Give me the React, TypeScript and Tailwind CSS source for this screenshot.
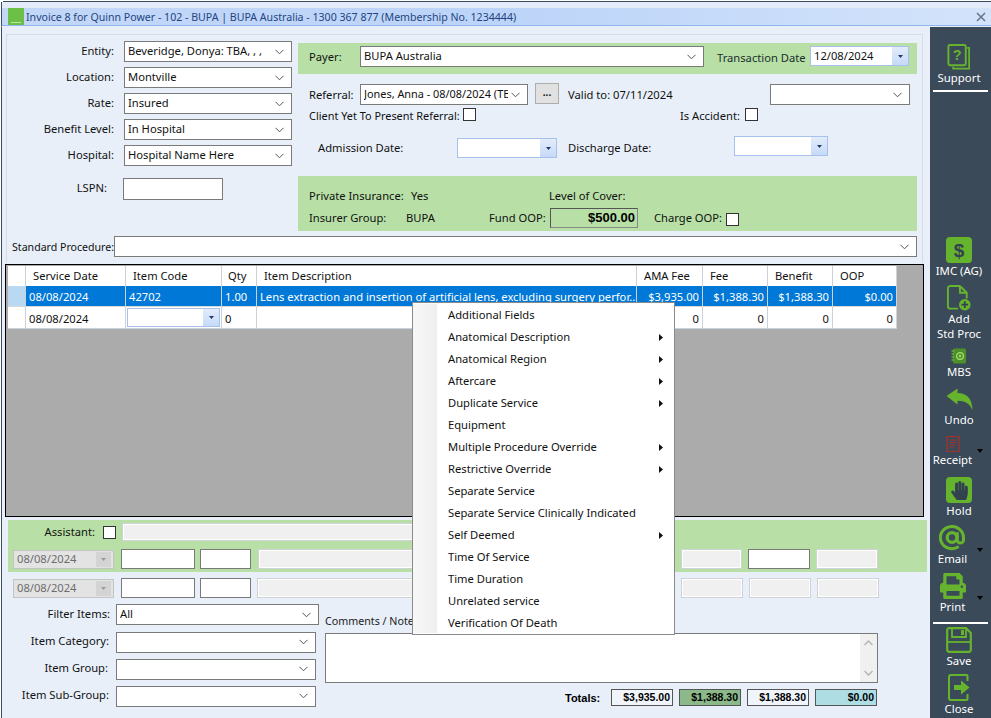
import React from "react";
import { FaHandPaper, FaPrint } from "react-icons/fa";

const Chevron = () => (
  <svg width="9" height="6" viewBox="0 0 9 6" className="shrink-0">
    <path d="M0.5 0.8 L4.5 4.8 L8.5 0.8" fill="none" stroke="#555" strokeWidth="1" />
  </svg>
);

function Select({ text, className = "", textClass = "" }: { text?: string; className?: string; textClass?: string }) {
  return (
    <div className={`flex items-center justify-between bg-white border border-[#7a7a7a] pl-[3px] pr-[3px] h-[21px] shrink-0 ${className}`}>
      <span className={`min-w-0 mb-[2px] overflow-hidden whitespace-nowrap leading-[16px] ${textClass}`}>{text}</span>
      <span className="ml-[3px] mr-[4px] flex shrink-0"><Chevron /></span>
    </div>
  );
}

function DateBox({ text, className = "" }: { text?: string; className?: string }) {
  return (
    <div className={`flex items-center justify-between bg-white border border-[#a6c2ec] pl-[3px] h-[20px] shrink-0 ${className}`}>
      <span className="leading-[14px]">{text}</span>
      <span className="flex items-center justify-center h-full w-[16px] bg-gradient-to-b from-[#e2ecfb] to-[#c6daf7]">
        <svg width="5" height="3" viewBox="0 0 5 3"><path d="M0 0 H5 L2.5 3 Z" fill="#1f3a6e" /></svg>
      </span>
    </div>
  );
}

const Check = ({ className = "" }: { className?: string }) => (
  <div className={`w-[13px] h-[13px] bg-white border border-[#333] shrink-0 ${className}`} />
);

const Input = ({ className = "" }: { className?: string }) => (
  <div className={`bg-white border border-[#7a7a7a] shrink-0 ${className}`} />
);

const Disabled = ({ className = "" }: { className?: string }) => (
  <div className={`bg-[#f0f0f0] border-2 border-white outline outline-1 outline-[#cfd3d8] -outline-offset-1 shrink-0 ${className}`} />
);

const DisabledDate = () => (
  <div className="flex items-center justify-between w-[101px] h-[19px] bg-[#e3e3e3] border border-[#c4c4c4] pl-[3px] pr-[2px] text-[#6d6d6d] shrink-0">
    <span className="leading-[14px]">08/08/2024</span>
    <span className="flex items-center justify-center w-[15px] h-[15px] bg-[#d4d4d4]">
      <svg width="5" height="3" viewBox="0 0 5 3"><path d="M0 0 H5 L2.5 3 Z" fill="#9a9a9a" /></svg>
    </span>
  </div>
);

const Total = ({ children, className = "" }: { children: React.ReactNode; className?: string }) => (
  <div className={`w-[62px] h-[17px] border border-[#555] flex items-center justify-end pr-[2px] font-['Liberation_Sans',sans-serif] font-bold text-[10.5px] text-black shrink-0 ${className}`}>
    {children}
  </div>
);

const Caret = () => (
  <svg width="6" height="4" viewBox="0 0 6 4" className="absolute right-[5px] bottom-[15px]"><path d="M0 0 H6 L3 4 Z" fill="#000" /></svg>
);

const SideLabel = ({ children }: { children: React.ReactNode }) => (
  <div className="h-[16px] leading-[16px] text-white text-center whitespace-nowrap">{children}</div>
);

const Cell = ({ children, className = "" }: { children?: React.ReactNode; className?: string }) => (
  <div className={`flex items-center shrink-0 whitespace-nowrap overflow-hidden border-r border-[#c9d3de] ${className}`}>{children}</div>
);

const cols = ["w-[18px]", "w-[100px]", "w-[96px]", "w-[35px]", "w-[380px]", "w-[66px]", "w-[65px]", "w-[65px]", "w-[64px]"];

const menu: [string, boolean][] = [
  ["Additional Fields", false],
  ["Anatomical Description", true],
  ["Anatomical Region", true],
  ["Aftercare", true],
  ["Duplicate Service", true],
  ["Equipment", false],
  ["Multiple Procedure Override", true],
  ["Restrictive Override", true],
  ["Separate Service", false],
  ["Separate Service Clinically Indicated", false],
  ["Self Deemed", true],
  ["Time Of Service", false],
  ["Time Duration", false],
  ["Unrelated service", false],
  ["Verification Of Death", false],
];

const G = "#66b32e";

export default function App() {
  return (
    <div className="relative w-[991px] h-[718px] overflow-hidden bg-white text-[11.2px] text-[#111] font-['Noto_Sans',sans-serif]">
      <div className="h-px bg-white" />
      <div className="h-[1px] ml-[3px] bg-[#3c4a62]" />
      <div className="h-[6px] ml-[1px] border-l border-[#3c4a62] bg-[#e3ebf8]" />
      <div className="ml-[1px] border-l border-[#3c4a62] h-[17px] flex items-center bg-gradient-to-r from-[#c3d7f8] via-[#bcd4f9] to-[#d3e3fa] pl-[6px] pr-[5px]">
        <div className="w-[16px] h-[17px] -mt-[1px] bg-[#6cbf47] shrink-0 flex items-end justify-center">
          <div className="w-[10px] h-px mb-[2px] bg-[#b8e6a0]" />
        </div>
        <span className="ml-[2px] text-[#23457f] text-[10.6px] leading-[14px] whitespace-nowrap">Invoice 8 for Quinn Power - 102 - BUPA | BUPA Australia - 1300 367 877 (Membership No. 1234444)</span>
        <svg width="10" height="10" viewBox="0 0 10 10" className="ml-auto mr-0">
          <path d="M1 1 L9 9 M9 1 L1 9" stroke="#6c7686" strokeWidth="1.6" />
        </svg>
      </div>
      <div className="ml-[1px] border-l border-[#3c4a62] h-[2px] bg-[#8fb6ee] border-b border-b-[#e8eff9]" />

      <div className="ml-[1px] border-l border-[#3c4a62] flex h-[691px] bg-[#e8eff9]">
        {/* main */}
        <div className="w-[928px] pl-[3px] pt-[7px] shrink-0">
          <div className="ml-px w-[917px] h-[229px] border-t border-r border-l border-[#d8dbdf]">
            <div className="flex h-[197px]">
              {/* left col */}
              <div className="w-[291px] shrink-0 pt-[6px] flex flex-col gap-[5px]">
                {[
                  ["Entity:", "Beveridge, Donya: TBA, , ,"],
                  ["Location:", "Montville"],
                  ["Rate:", "Insured"],
                  ["Benefit Level:", "In Hospital"],
                  ["Hospital:", "Hospital Name Here"],
                ].map(([l, v]) => (
                  <div key={l} className="flex items-center h-[21px]">
                    <span className="w-[107px] mb-[2px] text-right leading-[14px]">{l}</span>
                    <Select text={v} className="ml-[10px] w-[168px]" />
                  </div>
                ))}
                <div className="flex items-center h-[22px] mt-[7px]">
                  <span className="w-[100px] mb-[2px] text-right leading-[14px]">LSPN:</span>
                  <Input className="ml-[16px] w-[100px] h-[22px]" />
                </div>
              </div>
              {/* right col */}
              <div className="w-[619px] shrink-0 pt-[8px]">
                <div className="h-[31px] bg-[#b8e0a6] flex items-start pt-[3px] pl-[11px]">
                  <span className="w-[51px] mt-[4px] leading-[14px]">Payer:</span>
                  <Select text="BUPA Australia" className="w-[344px]" />
                  <span className="ml-[13px] w-[93px] mt-[5px] leading-[14px] whitespace-nowrap text-[#1b2e2e]">Transaction Date</span>
                  <DateBox text="12/08/2024" className="w-[99px]" />
                </div>
                <div className="flex items-center h-[23px] mt-[9px] pl-[11px]">
                  <span className="w-[51px] leading-[14px]">Referral:</span>
                  <Select text="Jones, Anna - 08/08/2024 (TBA)" textClass="text-[10.9px]" className="w-[168px]" />
                  <div className="ml-[7px] w-[24px] h-[21px] bg-[#e1e1e1] border border-[#adadad] flex items-center justify-center leading-none text-[10px] font-bold pb-[3px] -mt-[2px]">...</div>
                  <span className="ml-[9px] w-[202px] leading-[14px]">Valid to: 07/11/2024</span>
                  <Select className="w-[140px]" />
                </div>
                <div className="flex items-center h-[20px] pl-[11px]">
                  <span className="w-[154px] text-[10.9px] leading-[14px] whitespace-nowrap">Client Yet To Present Referral:</span>
                  <Check className="-mt-[4px]" />
                  <span className="ml-[204px] w-[65px] leading-[14px] whitespace-nowrap">Is Accident:</span>
                  <Check className="-mt-[3px]" />
                </div>
                <div className="flex items-start h-[22px] mt-[10px] pl-[20px]">
                  <span className="w-[139px] mt-[5px] leading-[14px]">Admission Date:</span>
                  <DateBox className="w-[100px] mt-[2px]" />
                  <span className="ml-[11px] w-[166px] mt-[5px] leading-[14px]">Discharge Date:</span>
                  <DateBox className="w-[94px]" />
                </div>
                <div className="h-[55px] mt-[18px] bg-[#b8e0a6] pt-[12px] pl-[11px]">
                  <div className="flex items-center h-[16px]">
                    <span className="w-[102px] leading-[14px] whitespace-nowrap">Private Insurance:</span>
                    <span className="w-[138px] leading-[14px]">Yes</span>
                    <span className="leading-[14px]">Level of Cover:</span>
                  </div>
                  <div className="flex items-center h-[22px] mt-[3px]">
                    <span className="w-[97px] leading-[14px]">Insurer Group:</span>
                    <span className="w-[83px] leading-[14px]">BUPA</span>
                    <span className="w-[61px] leading-[14px] whitespace-nowrap">Fund OOP:</span>
                    <div className="w-[88px] h-[20px] border-l border-t border-[#555] border-r border-b border-r-[#888] border-b-[#888] flex items-center justify-end pr-[2px] font-['Liberation_Sans',sans-serif] font-bold text-[13px] text-black">$500.00</div>
                    <span className="ml-[16px] w-[72px] leading-[14px] whitespace-nowrap">Charge OOP:</span>
                    <Check className="mt-[3px]" />
                  </div>
                </div>
              </div>
            </div>
            <div className="flex items-center h-[21px] mt-[4px]">
              <span className="ml-[5px] w-[102px] text-[10.6px] leading-[14px] whitespace-nowrap">Standard Procedure:</span>
              <Select className="w-[803px]" />
            </div>
          </div>

          {/* grid */}
          <div className="w-[919px] h-[253px] mt-px border border-black bg-[#ababab] pl-[2px] pt-px">
            <div className="flex h-[20px] bg-white w-[889px]">
              <Cell className={cols[0]} />
              <Cell className={`${cols[1]} pl-[7px]`}>Service Date</Cell>
              <Cell className={`${cols[2]} pl-[7px]`}>Item Code</Cell>
              <Cell className={`${cols[3]} pl-[6px]`}>Qty</Cell>
              <Cell className={`${cols[4]} pl-[7px]`}>Item Description</Cell>
              <Cell className={`${cols[5]} pl-[7px]`}>AMA Fee</Cell>
              <Cell className={`${cols[6]} pl-[7px]`}>Fee</Cell>
              <Cell className={`${cols[7]} pl-[7px]`}>Benefit</Cell>
              <Cell className={`${cols[8]} pl-[7px]`}>OOP</Cell>
            </div>
            <div className="flex h-[21px] w-[889px] text-white border-b border-[#d8d8d8] bg-[#0078d7]">
              <Cell className={`${cols[0]} bg-[#b9d9f2]`} />
              <Cell className={`${cols[1]} pl-[3px] pt-[2px]`}>08/08/2024</Cell>
              <Cell className={`${cols[2]} pl-[3px] pt-[2px]`}>42702</Cell>
              <Cell className={`${cols[3]} pl-[3px] pt-[2px]`}>1.00</Cell>
              <Cell className={`${cols[4]} pl-[3px] pt-[2px]`}>Lens extraction and insertion of artificial lens, excluding surgery perfor...</Cell>
              <Cell className={`${cols[5]} justify-end pr-[3px] pt-[2px]`}>$3,935.00</Cell>
              <Cell className={`${cols[6]} justify-end pr-[3px] pt-[2px]`}>$1,388.30</Cell>
              <Cell className={`${cols[7]} justify-end pr-[3px] pt-[2px]`}>$1,388.30</Cell>
              <Cell className={`${cols[8]} justify-end pr-[3px] pt-[2px]`}>$0.00</Cell>
            </div>
            <div className="flex h-[22px] w-[889px] bg-white border-b border-[#c9d3de]">
              <Cell className={cols[0]} />
              <Cell className={`${cols[1]} pl-[3px] pt-[4px]`}>08/08/2024</Cell>
              <Cell className={`${cols[2]} p-px`}><DateBox className="w-full h-full" /></Cell>
              <Cell className={`${cols[3]} pl-[3px] pt-[4px]`}>0</Cell>
              <Cell className={cols[4]} />
              <Cell className={`${cols[5]} justify-end pr-[3px] pt-[4px]`}>0</Cell>
              <Cell className={`${cols[6]} justify-end pr-[3px] pt-[4px]`}>0</Cell>
              <Cell className={`${cols[7]} justify-end pr-[3px] pt-[4px]`}>0</Cell>
              <Cell className={`${cols[8]} justify-end pr-[3px] pt-[4px]`}>0</Cell>
            </div>
          </div>

          {/* assistant */}
          <div className="ml-[3px] mt-[3px] w-[919px] h-[52px] bg-[#b8e0a6] pl-[5px] pt-[3px]">
            <div className="flex items-center h-[18px]">
              <span className="w-[82px] text-right leading-[14px]">Assistant:</span>
              <Check className="ml-[8px]" />
              <Disabled className="ml-[6px] w-[320px] h-[18px]" />
            </div>
            <div className="flex items-center h-[20px] mt-[8px]">
              <DisabledDate />
              <Input className="ml-[7px] w-[74px] h-[20px]" />
              <Input className="ml-[5px] w-[51px] h-[20px]" />
              <Disabled className="ml-[7px] w-[300px] h-[20px]" />
              <Disabled className="ml-[123px] w-[61px] h-[20px]" />
              <Input className="ml-[6px] w-[62px] h-[20px]" />
              <Disabled className="ml-[6px] w-[62px] h-[20px]" />
            </div>
          </div>
          <div className="ml-[8px] flex items-center h-[20px] mt-[6px]">
            <DisabledDate />
            <Input className="ml-[7px] w-[74px] h-[20px]" />
            <Input className="ml-[5px] w-[51px] h-[20px]" />
            <Disabled className="ml-[6px] w-[300px] h-[20px]" />
            <Disabled className="ml-[124px] w-[62px] h-[20px]" />
            <Disabled className="ml-[6px] w-[62px] h-[20px]" />
            <Disabled className="ml-[6px] w-[62px] h-[20px]" />
          </div>

          {/* bottom */}
          <div className="flex mt-[6px]">
            <div className="w-[320px] shrink-0">
              <div className="flex items-center h-[21px]">
                <span className="w-[105px] mb-[2px] text-right leading-[14px]">Filter Items:</span>
                <Select text="All" className="ml-[6px] w-[203px]" />
              </div>
              <div className="flex items-center h-[20px] mt-[7px]">
                <span className="w-[104px] mb-[2px] text-right leading-[14px]">Item Category:</span>
                <Select text="" className="ml-[7px] w-[200px] h-[20px]" />
              </div>
              <div className="flex items-center h-[20px] mt-[7px]">
                <span className="w-[103px] mb-[2px] text-right leading-[14px]">Item Group:</span>
                <Select text="" className="ml-[8px] w-[200px] h-[20px]" />
              </div>
              <div className="flex items-center h-[20px] mt-[7px]">
                <span className="w-[104px] mb-[2px] text-right leading-[14px] whitespace-nowrap">Item Sub-Group:</span>
                <Select text="" className="ml-[7px] w-[200px] h-[20px]" />
              </div>
            </div>
            <div className="w-[553px] shrink-0">
              <div className="h-[14px] mt-[10px] text-[10.7px] leading-[14px] text-[#222]">Comments / Notes:</div>
              <div className="h-[50px] mt-[5px] bg-white border border-[#7a7a7a] flex justify-end">
                <div className="w-[17px] h-full bg-[#f0f0f0] flex flex-col items-center justify-between py-[6px]">
                  <svg width="9" height="6" viewBox="0 0 9 6"><path d="M0.5 5 L4.5 1 L8.5 5" fill="none" stroke="#b5b5b5" strokeWidth="1.5" /></svg>
                  <svg width="9" height="6" viewBox="0 0 9 6"><path d="M0.5 1 L4.5 5 L8.5 1" fill="none" stroke="#b5b5b5" strokeWidth="1.5" /></svg>
                </div>
              </div>
              <div className="flex items-center h-[17px] mt-[6px] pl-[240px]">
                <span className="w-[46px] font-['Liberation_Sans',sans-serif] font-bold text-[11px] leading-[14px] text-black">Totals:</span>
                <Total className="bg-[#f0f4fb]">$3,935.00</Total>
                <Total className="ml-[6px] bg-[#8cb98a]">$1,388.30</Total>
                <Total className="ml-[6px] bg-[#f0f4fb]">$1,388.30</Total>
                <Total className="ml-[6px] bg-[#aedde4]">$0.00</Total>
              </div>
            </div>
          </div>
        </div>

        {/* sidebar */}
        <div className="w-[61px] shrink-0 h-full bg-[#3a4a59] flex flex-col pr-[3px] items-center text-[11.4px]">
          <div className="h-[17px]" />
          <svg width="24" height="26" viewBox="0 0 24 27" fill="none">
            <rect x="1" y="1" width="18" height="21" rx="1.5" stroke={G} strokeWidth="2" />
            <path d="M20.5 4 H22.5 V25.5 H6 V23.5" stroke={G} strokeWidth="1.8" />
            <text x="10" y="17" textAnchor="middle" fontSize="15" fontWeight="700" fill={G} fontFamily="Liberation Sans, sans-serif">?</text>
          </svg>
          <SideLabel>Support</SideLabel>
          <div className="w-[55px] h-[2px] mt-[4px] bg-white ml-[3px]" />

          <div className="mt-[145px] w-[26px] h-[26px] rounded-[4px] bg-[#66b32e] flex items-center justify-center text-[#33424f] font-['Liberation_Sans',sans-serif] font-bold text-[19px] leading-none">$</div>
          <SideLabel>IMC (AG)</SideLabel>

          <svg className="mt-[6px]" width="26" height="26" viewBox="0 0 26 27" fill="none">
            <path d="M14 1 H4 a2.5 2.5 0 0 0 -2.5 2.5 V22 a2.5 2.5 0 0 0 2.5 2.5 H12 M14 1 L21 8 V14 M14 1 V8 H21" stroke={G} strokeWidth="2" />
            <circle cx="19" cy="20.5" r="6" fill={G} />
            <path d="M19 17 V24 M15.5 20.5 H22.5" stroke="#33424f" strokeWidth="1.8" />
          </svg>
          <div className="h-[15px] leading-[15px] text-white text-center whitespace-nowrap">Add</div>
          <div className="h-[15px] leading-[15px] text-white text-center whitespace-nowrap">Std Proc</div>

          <svg className="mt-[7px]" width="16" height="16" viewBox="0 0 16 16">
            <rect x="2" y="0.5" width="13" height="15" rx="1.5" fill="#4d8f2a" />
            <path d="M0.5 3 H3 M0.5 6 H3 M0.5 9 H3 M0.5 12 H3" stroke="#7fce45" strokeWidth="1" />
            <circle cx="9" cy="8" r="3.4" fill="none" stroke="#a4e06c" strokeWidth="1.2" />
            <circle cx="9" cy="8" r="1.2" fill="#a4e06c" />
          </svg>
          <SideLabel>MBS</SideLabel>

          <svg className="mt-[8px]" width="27" height="24" viewBox="0 0 27 24">
            <path d="M0.5 8 L11.5 0.5 V5 C20 5 26.5 10 26.5 22.5 C24 15.5 19 12.8 11.5 12.8 V16.5 Z" fill={G} />
          </svg>
          <SideLabel>Undo</SideLabel>

          <div className="relative w-full flex flex-col items-center pr-[13px] mt-[8px]">
            <svg width="14" height="16" viewBox="0 0 14 16" fill="none">
              <rect x="1" y="0.5" width="12" height="15" stroke="#a7322c" strokeWidth="1.2" />
              <path d="M3.5 4 H10.5 M3.5 6.5 H10.5 M3.5 9 H10.5 M3.5 11.5 H7" stroke="#a7322c" strokeWidth="1" />
            </svg>
            <SideLabel>Receipt</SideLabel>
            <Caret />
          </div>

          <div className="mt-[9px] w-[26px] h-[26px] rounded-[4px] bg-[#66b32e] flex items-center justify-center text-[#33424f]">
            <FaHandPaper size={19} />
          </div>
          <SideLabel>Hold</SideLabel>

          <div className="relative w-full flex flex-col items-center pr-[13px] mt-[6px]">
            <svg width="27" height="26" viewBox="0 0 28 27" fill="none">
              <circle cx="13.5" cy="13" r="5" stroke={G} strokeWidth="3.4" />
              <path d="M19 7.5 V15.5 a3.2 3.2 0 0 0 6.4 0 V13 a12 11.5 0 1 0 -5 9.4" stroke={G} strokeWidth="3.2" />
            </svg>
            <SideLabel>Email</SideLabel>
            <Caret />
          </div>

          <div className="relative w-full flex flex-col items-center pr-[13px] mt-[6px]">
            <div className="h-[26px] flex items-center text-[#66b32e]"><FaPrint size={26} /></div>
            <SideLabel>Print</SideLabel>
            <Caret />
          </div>

          <div className="w-[55px] h-[2px] mt-[7px] bg-white ml-[3px]" />

          <svg className="mt-[3px]" width="26" height="26" viewBox="0 0 26 26" fill="none">
            <path d="M2.5 1.2 H20 L24.8 6 V23 a1.8 1.8 0 0 1 -1.8 1.8 H3 a1.8 1.8 0 0 1 -1.8 -1.8 V3 a1.8 1.8 0 0 1 1.3 -1.8 Z" stroke={G} strokeWidth="2.2" />
            <path d="M6 1.5 V10 H20 V1.5" stroke={G} strokeWidth="1.8" />
            <rect x="15" y="3" width="3" height="5" fill={G} />
            <path d="M1.5 15 H24.5" stroke={G} strokeWidth="1.8" />
          </svg>
          <SideLabel>Save</SideLabel>

          <svg className="mt-[5px]" width="22" height="27" viewBox="0 0 22 27" fill="none">
            <path d="M19.5 7 V2 a1 1 0 0 0 -1 -1 H3 a2 2 0 0 0 -2 2 V24 a2 2 0 0 0 2 2 H18.5 a1 1 0 0 0 1 -1 V20" stroke={G} strokeWidth="2" />
            <path d="M6 11 H13 V6.5 L21.5 13.5 L13 20.5 V16 H6 Z" fill={G} />
          </svg>
          <SideLabel>Close</SideLabel>
        </div>
      </div>

      {/* context menu */}
      <div className="absolute left-[412px] top-[302px] w-[263px] h-[333px] bg-white border border-[#8a8a8a] py-px flex">
        <div className="absolute left-0 top-px bottom-px w-[24px] bg-gradient-to-r from-[#f7f7f7] to-[#efefef]" />
        <div className="relative w-full">
          {menu.map(([t, sub]) => (
            <div key={t} className="h-[22px] flex items-center justify-between pl-[35px] pr-[11px]">
              <span className="leading-[16px]">{t}</span>
              {sub && (
                <svg width="4" height="7" viewBox="0 0 4 7"><path d="M0 0 L4 3.5 L0 7 Z" fill="#111" /></svg>
              )}
            </div>
          ))}
        </div>
      </div>
    </div>
  );
}
